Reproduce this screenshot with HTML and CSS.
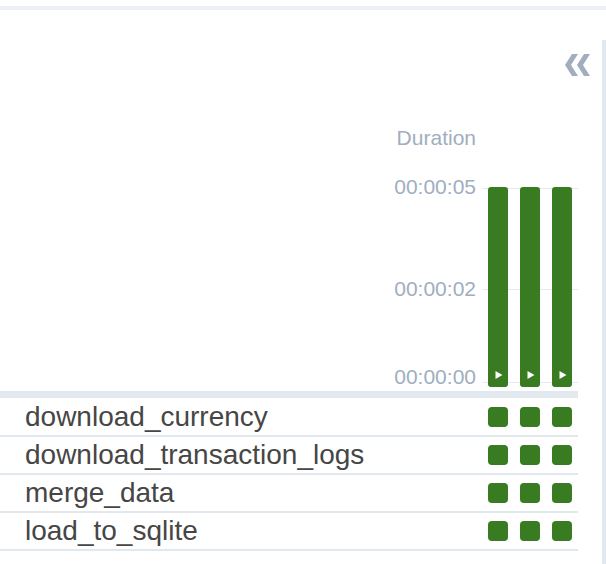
FILE: index.html
```html
<!DOCTYPE html>
<html lang="en">
<head>
<meta charset="utf-8">
<title>Grid</title>
<link rel="stylesheet" href="styles.css">
</head>
<body>
<div class="topbar"></div>
<div class="layout">
  <main class="main">
    <div class="toolbar">
      <button class="collapse" aria-label="Collapse details">
        <svg width="26" height="22" viewBox="0 0 26 22"><polygon points="7,0 13,0 6,11 13,22 7,22 0,11" fill="#a0aec0"/><polygon points="19,0 25,0 18,11 25,22 19,22 12,11" fill="#a0aec0"/></svg>
      </button>
    </div>
    <section class="chart">
      <div class="chart-head"><span class="duration">Duration</span></div>
      <div class="plot">
        <div class="axis">
          <span class="tick t-top">00:00:05</span>
          <span class="tick t-mid">00:00:02</span>
          <span class="tick t-bot">00:00:00</span>
        </div>
        <div class="bars">
          <div class="gridline g-top"></div>
          <div class="gridline g-mid"></div>
          <div class="gridline g-bot"></div>
          <div class="bar"><svg class="play" width="8" height="8" viewBox="0 0 8 8"><polygon points="0.5,0 7.5,4 0.5,8" fill="#fff"/></svg></div>
          <div class="bar"><svg class="play" width="8" height="8" viewBox="0 0 8 8"><polygon points="0.5,0 7.5,4 0.5,8" fill="#fff"/></svg></div>
          <div class="bar"><svg class="play" width="8" height="8" viewBox="0 0 8 8"><polygon points="0.5,0 7.5,4 0.5,8" fill="#fff"/></svg></div>
        </div>
      </div>
    </section>
    <div class="band"></div>
    <ul class="tasks">
      <li class="task"><span class="name">download_currency</span><span class="cells"><i class="cell"></i><i class="cell"></i><i class="cell"></i></span></li>
      <li class="task"><span class="name">download_transaction_logs</span><span class="cells"><i class="cell"></i><i class="cell"></i><i class="cell"></i></span></li>
      <li class="task"><span class="name">merge_data</span><span class="cells"><i class="cell"></i><i class="cell"></i><i class="cell"></i></span></li>
      <li class="task"><span class="name">load_to_sqlite</span><span class="cells"><i class="cell"></i><i class="cell"></i><i class="cell"></i></span></li>
    </ul>
  </main>
  <aside class="sidebar"></aside>
</div>
</body>
</html>
```
FILE: styles.css
```css
* { box-sizing: border-box; }
html, body { margin: 0; padding: 0; background: #fff; }
body {
  height: 564px;
  overflow: hidden;
  display: flex;
  flex-direction: column;
  font-family: "Liberation Sans", Arial, Helvetica, sans-serif;
}
.topbar {
  margin-top: 6px;
  height: 4px;
  background: #edf0f6;
  flex: none;
}
.layout {
  flex: 1;
  display: flex;
}
.main {
  flex: 1;
  display: flex;
  flex-direction: column;
}
.sidebar {
  width: 4px;
  margin-top: 30px;
  background: #e2e8f0;
  flex: none;
}
.toolbar {
  display: flex;
  justify-content: flex-end;
  padding: 44px 11px 0 0;
}
.collapse {
  border: 0;
  padding: 0;
  margin: 0;
  background: none;
  display: block;
  height: 22px;
}
.collapse svg { display: block; }
.chart {
  width: 578px;
  margin-top: 50px;
}
.chart-head {
  display: flex;
  justify-content: flex-end;
  padding-right: 102px;
}
.duration {
  font-size: 21px;
  line-height: 24px;
  color: #a0aec0;
}
.plot {
  margin-top: 37px;
  height: 204px;
  display: flex;
  justify-content: flex-end;
}
.axis {
  position: relative;
  width: 120px;
}
.tick {
  position: absolute;
  right: 6px;
  font-size: 21px;
  line-height: 24px;
  color: #a0aec0;
  white-space: nowrap;
}
.t-top { top: -12px; }
.t-mid { top: 90px; }
.t-bot { top: 178px; }
.bars {
  position: relative;
  width: 96px;
  display: flex;
  gap: 12px;
  padding-left: 6px;
}
.gridline {
  position: absolute;
  left: 0;
  right: 0;
  height: 1px;
  background: #e6eaf0;
}
.g-top { top: 1px; }
.g-mid { top: 102px; }
.g-bot { top: 195px; }
.bar {
  position: relative;
  width: 20px;
  height: 200px;
  background: #387b21;
  border-radius: 3px;
  display: flex;
  align-items: flex-end;
  justify-content: center;
  padding-bottom: 8px;
  padding-left: 1px;
}
.play { display: block; }
.band {
  width: 578px;
  height: 7px;
  background: #e2e8f0;
  margin-bottom: 1px;
}
.tasks {
  list-style: none;
  margin: 0;
  padding: 0;
  width: 578px;
}
.task {
  height: 38px;
  border-bottom: 2px solid #e2e8f0;
  display: flex;
  align-items: center;
  justify-content: space-between;
  padding: 0 6px 0 25px;
}
.name {
  font-size: 28px;
  line-height: 36px;
  color: #464646;
  white-space: nowrap;
}
.cells {
  display: flex;
  gap: 12px;
}
.cell {
  display: block;
  width: 20px;
  height: 20px;
  background: #387b21;
  border-radius: 4px;
}
```
